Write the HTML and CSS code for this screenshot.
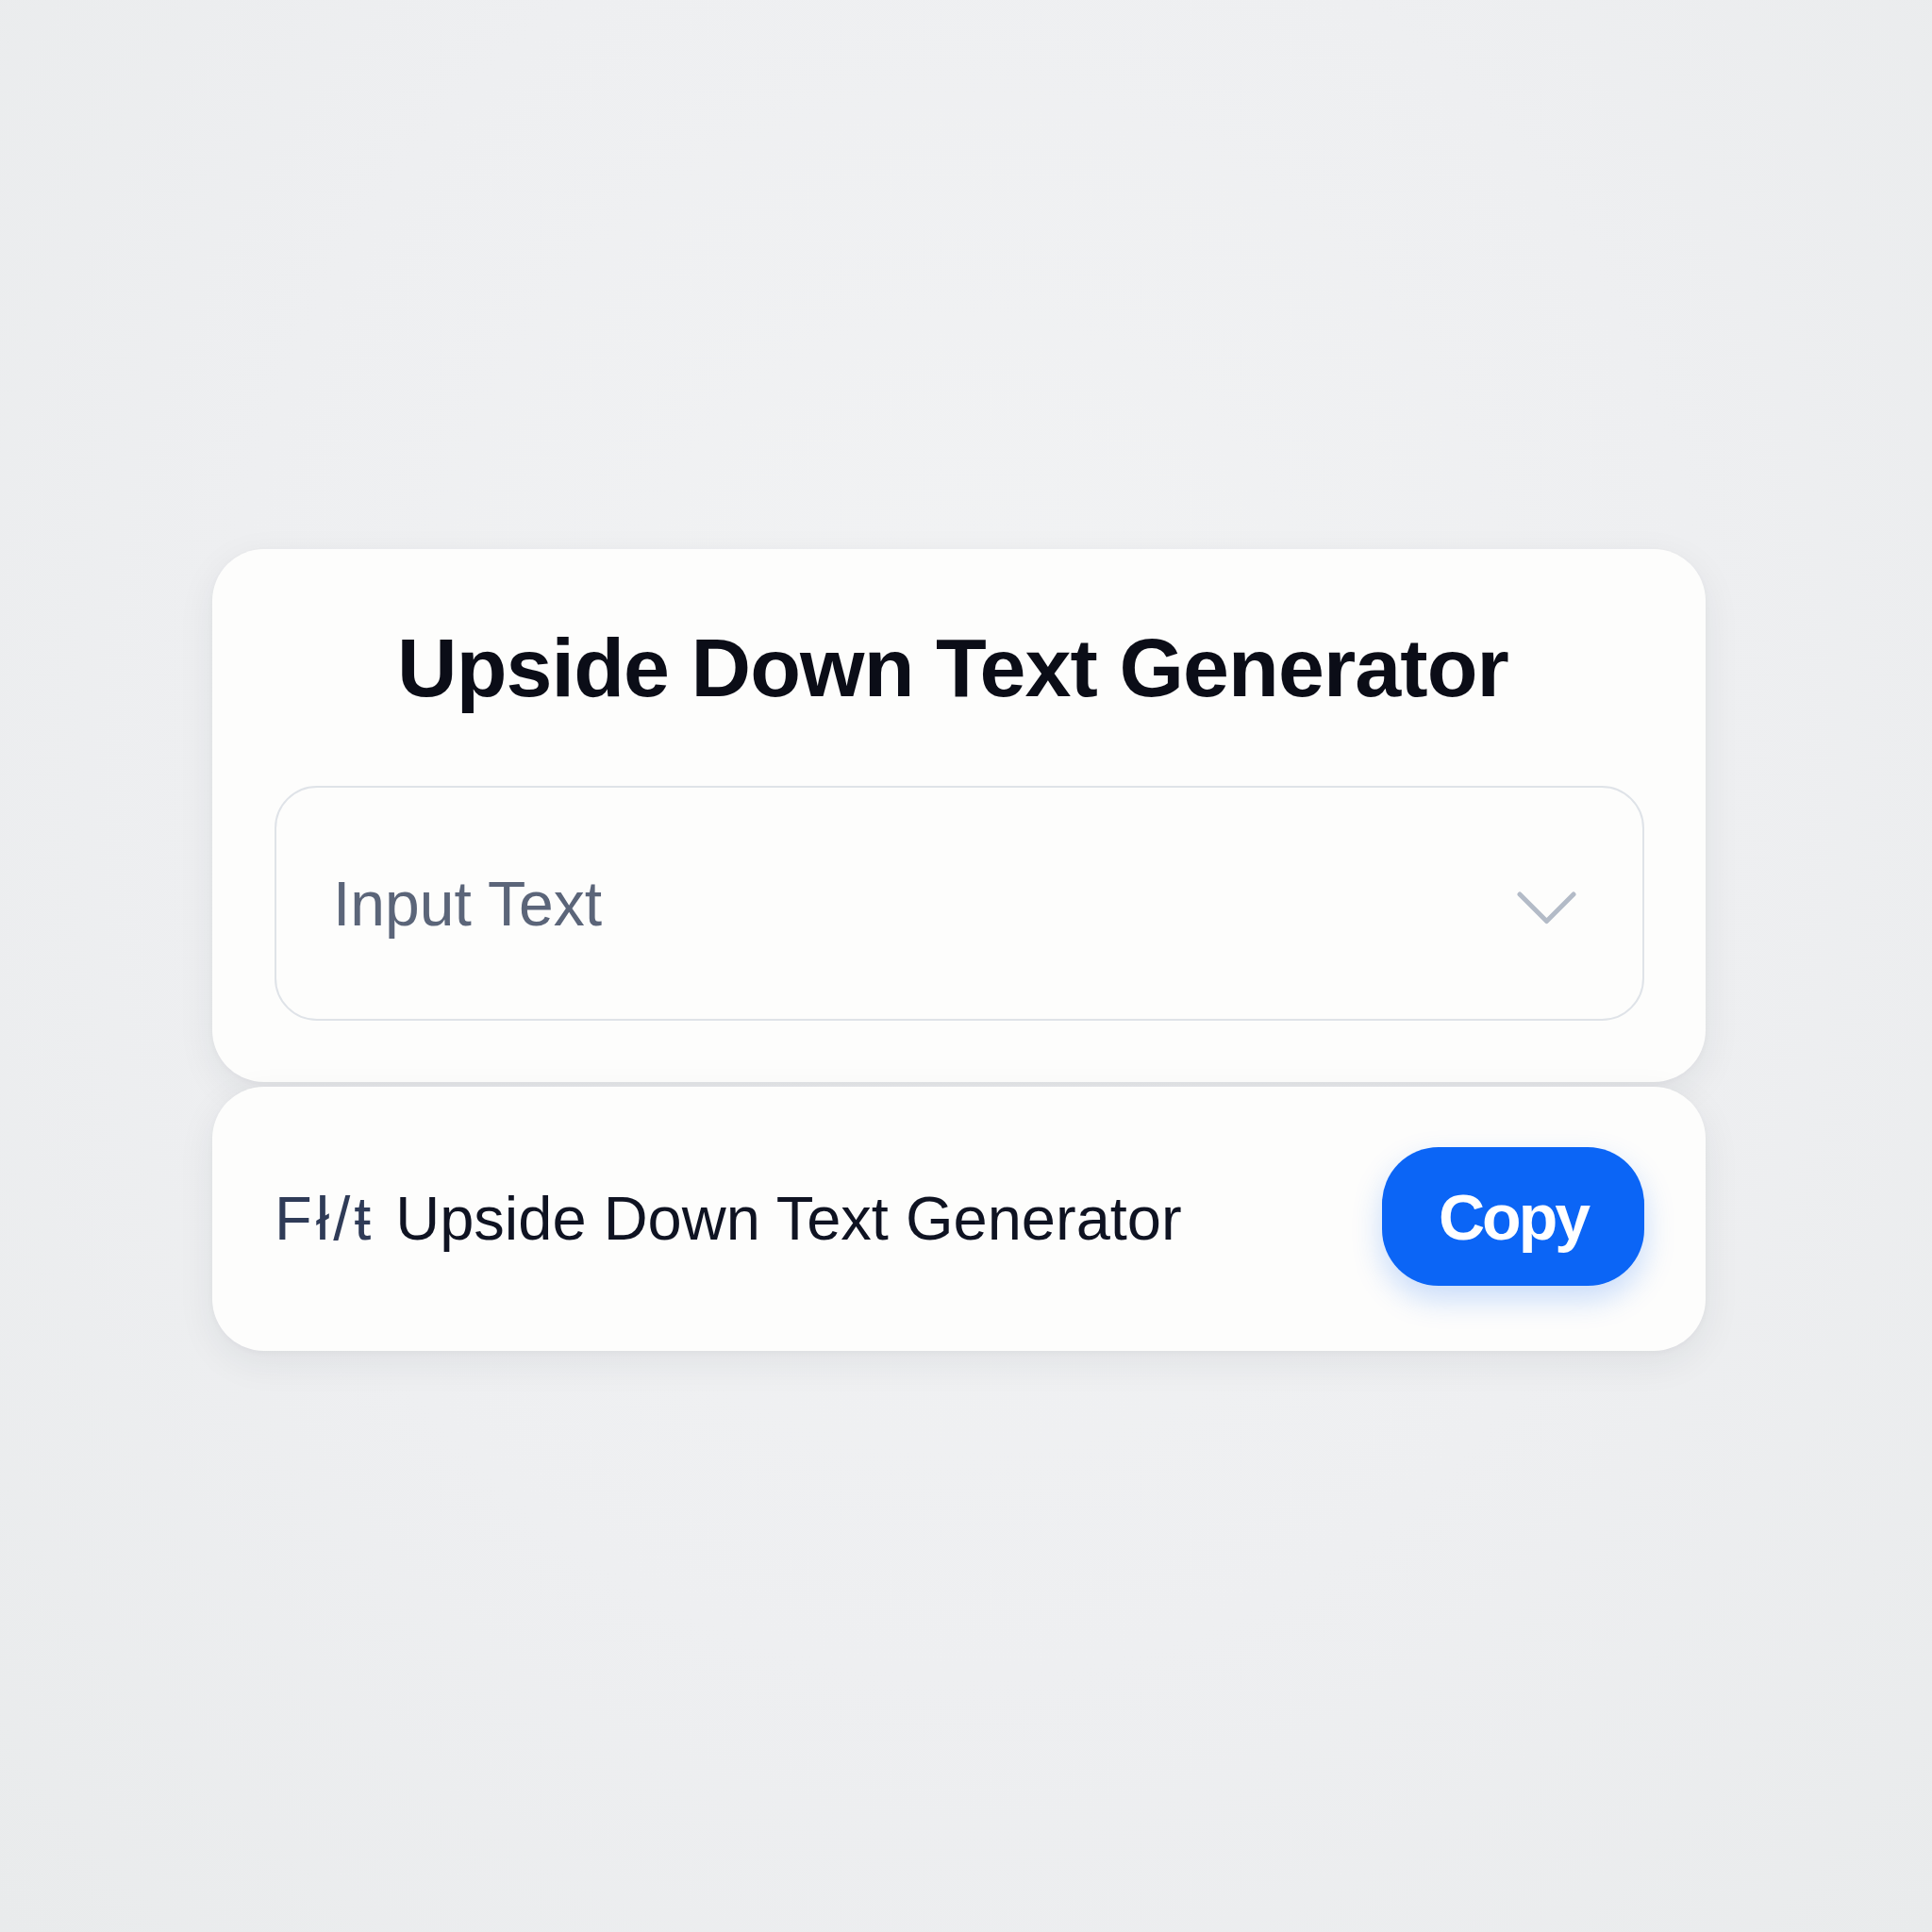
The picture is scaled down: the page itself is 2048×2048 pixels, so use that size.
FILE: index.html
```html
<!DOCTYPE html>
<html>
<head>
    <meta charset="UTF-8">
    <title>Upside Down Text Generator</title>
    <link rel="stylesheet" href="styles.css">
</head>
<body>
    <div class="container">
        <div class="card card-main">
            <h1>Upside Down Text Generator</h1>
            <div class="input-box">
                <span class="placeholder">Input Text</span>
                <svg class="chevron" width="63" height="35" viewBox="0 0 63 35">
                    <polyline points="3,3 31.5,31.5 60,3" fill="none" stroke="#b3bbc7" stroke-width="5" stroke-linecap="round" stroke-linejoin="round"/>
                </svg>
            </div>
        </div>

        <div class="card card-output">
            <p class="output"><span class="flipped">Fł/ŧ</span>Upside Down Text Generator</p>
            <button class="copy-btn">Copy</button>
        </div>
    </div>
</body>
</html>
```

FILE: styles.css
```css
body {
    margin: 0;
    min-height: 2048px;
    font-family: 'Liberation Sans', Arial, sans-serif;
    background: radial-gradient(ellipse at 50% 40%, #f2f3f4 0%, #eeeff1 55%, #e9ebec 100%);
}
.container {
    width: 1583px;
    margin: 0 0 0 225px;
    padding-top: 582px;
    display: flex;
    flex-direction: column;
    gap: 5px;
}
.card {
    background: #fdfdfc;
    border-radius: 55px;
    box-shadow: 0 12px 40px rgba(30, 40, 60, 0.07), 0 2px 6px rgba(30, 40, 60, 0.03);
}
.card-main {
    padding: 81px 65px 65px 66px;
}
h1 {
    margin: 0 0 80px;
    padding-right: 14px;
    font-size: 88px;
    line-height: 90px;
    font-weight: 700;
    letter-spacing: -0.9px;
    color: #0b0d17;
    text-align: center;
}
.input-box {
    height: 245px;
    border: 2px solid #dfe3e8;
    border-radius: 45px;
    background: #fdfdfc;
    display: flex;
    align-items: center;
    justify-content: space-between;
    padding: 0 70px 0 60px;
}
.placeholder {
    font-size: 66px;
    line-height: 66px;
    color: #5b6579;
}
.chevron {
    display: block;
    margin-top: 10px;
}
.card-output {
    height: 280px;
    box-sizing: border-box;
    padding: 0 65px 0 66px;
    display: flex;
    align-items: center;
    justify-content: space-between;
}
.output {
    margin: 0;
    font-size: 65px;
    line-height: 64px;
    color: #0f1322;
    white-space: nowrap;
}
.flipped {
    color: #2f3b57;
    letter-spacing: 4px;
    margin-right: 22px;
}
.copy-btn {
    width: 278px;
    height: 147px;
    border: none;
    border-radius: 60px;
    background: #0b65f6;
    color: #ffffff;
    font-family: 'Liberation Sans', Arial, sans-serif;
    font-size: 68px;
    font-weight: 700;
    letter-spacing: -3px;
    padding-left: 6px;
    margin-top: -5px;
    box-shadow: 0 14px 32px rgba(11, 101, 246, 0.22);
}
```
